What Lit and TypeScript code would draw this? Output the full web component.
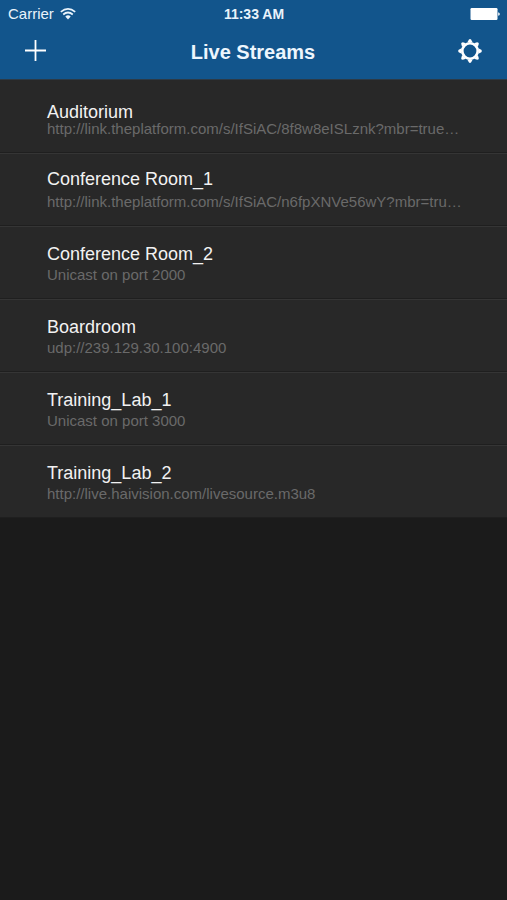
import { LitElement, html, svg, css } from "lit";
import { customElement, property } from "lit/decorators.js";
import { classMap } from "lit/directives/class-map.js";

type Spacing = "tight" | "normal" | "loose";

interface Stream {
  name: string;
  source: string;
  spacing: Spacing;
}

const STREAMS: Stream[] = [
  { name: "Auditorium", source: "http://link.theplatform.com/s/IfSiAC/8f8w8eISLznk?mbr=true…", spacing: "tight" },
  { name: "Conference Room_1", source: "http://link.theplatform.com/s/IfSiAC/n6fpXNVe56wY?mbr=tru…", spacing: "loose" },
  { name: "Conference Room_2", source: "Unicast on port 2000", spacing: "normal" },
  { name: "Boardroom", source: "udp://239.129.30.100:4900", spacing: "normal" },
  { name: "Training_Lab_1", source: "Unicast on port 3000", spacing: "normal" },
  { name: "Training_Lab_2", source: "http://live.haivision.com/livesource.m3u8", spacing: "normal" },
];

@customElement("status-bar")
export class StatusBar extends LitElement {
  static styles = css`
    :host {
      display: grid;
      grid-template-columns: 1fr auto 1fr;
      align-items: center;
      height: 26px;
      padding: 1px 7px 0 8px;
      color: #e9f3fb;
      font-size: 14px;
      line-height: 20px;
    }
    .carrier {
      display: flex;
      align-items: center;
      gap: 6px;
      font-size: 15px;
    }
    .time {
      font-weight: 700;
    }
    .battery {
      justify-self: end;
    }
    svg {
      display: block;
    }
  `;

  render() {
    return html`
      <div class="carrier">
        <span>Carrier</span>
        <svg width="16" height="12" viewBox="0 0 16 12" fill="none" stroke="currentColor" stroke-width="1.7" role="img" aria-label="Wi-Fi">
          <path d="M0.8 3.9Q8-2 15.2 3.9" />
          <path d="M3.2 6.5Q8 2.5 12.8 6.5" />
          <path d="M5.3 8.5Q8 6.2 10.7 8.5L8 11.4Z" fill="currentColor" stroke="none" />
        </svg>
      </div>
      <span class="time">11:33 AM</span>
      <svg class="battery" width="30" height="12" viewBox="0 0 30 12" fill="#fff" role="img" aria-label="Battery full">
        <rect x="0.5" y="0" width="27" height="12" rx="1.2" />
        <path d="M28.2 4.2Q29.8 4.6 29.8 6T28.2 7.8Z" />
      </svg>
    `;
  }
}

@customElement("nav-bar")
export class NavBar extends LitElement {
  static styles = css`
    :host {
      display: flex;
      align-items: center;
      justify-content: space-between;
      height: 48px;
      padding: 0 15px 0 14px;
      box-sizing: border-box;
      color: #fff;
    }
    .title {
      margin: 0;
      font-size: 20px;
      line-height: 24px;
      font-weight: 700;
      color: #edf6fd;
      padding-top: 2px;
    }
    .action {
      display: flex;
      align-items: center;
      justify-content: center;
      width: 44px;
      height: 44px;
      padding: 0;
      border: 0;
      background: none;
      color: inherit;
      cursor: pointer;
    }
  `;

  render() {
    const teeth = [0, 45, 90, 135, 180, 225, 270, 315];
    return html`
      <button class="action" type="button" aria-label="Add stream">
        <svg width="22" height="22" viewBox="0 0 22 22" stroke="currentColor" stroke-width="1.8">
          <path d="M10.5 0V21M0 10.5H21" />
        </svg>
      </button>
      <h1 class="title">Live Streams</h1>
      <button class="action" type="button" aria-label="Settings">
        <svg width="26" height="26" viewBox="-13 -13 26 26">
          <circle r="7.7" fill="none" stroke="currentColor" stroke-width="2.6" />
          ${teeth.map(
            (a) => svg`<path d="M-2.7-8.4L-1.2-11.3Q0-12.5 1.2-11.3L2.7-8.4Z" fill="currentColor" transform="rotate(${a})" />`
          )}
        </svg>
      </button>
    `;
  }
}

@customElement("stream-row")
export class StreamRow extends LitElement {
  @property({ attribute: false }) stream!: Stream;

  static styles = css`
    :host {
      display: block;
    }
    .row {
      display: flex;
      flex-direction: column;
      justify-content: flex-end;
      gap: 5px;
      width: 100%;
      height: 73px;
      box-sizing: border-box;
      padding: 0 24px 15px 47px;
      border: 0;
      border-top: 1px solid #353535;
      border-bottom: 1px solid #1f1f1f;
      background: #282828;
      font: inherit;
      text-align: left;
      cursor: pointer;
    }
    .tight {
      gap: 1px;
      border-top-color: #282828;
    }
    .loose {
      gap: 7px;
    }
    .name {
      font-size: 18px;
      line-height: 16px;
      color: #f2f2f2;
    }
    .source {
      width: 100%;
      font-size: 15px;
      line-height: 16px;
      color: #6a6a6a;
      white-space: nowrap;
      text-overflow: ellipsis;
      overflow-x: clip;
    }
  `;

  render() {
    const { name, source, spacing } = this.stream;
    return html`
      <button type="button" class=${classMap({ row: true, tight: spacing === "tight", loose: spacing === "loose" })}>
        <span class="name">${name}</span>
        <span class="source">${source}</span>
      </button>
    `;
  }
}

@customElement("app-root")
export class AppRoot extends LitElement {
  static styles = css`
    :host {
      display: block;
      min-height: 100vh;
      background: #1b1b1b;
      font-family: "Liberation Sans", Arial, Helvetica, sans-serif;
    }
    .header {
      display: flex;
      flex-direction: column;
      padding-bottom: 4px;
      background: #12558c;
      border-bottom: 1px solid #2c3a46;
    }
    .streams {
      margin: 0;
      padding: 0;
      list-style: none;
    }
  `;

  render() {
    return html`
      <header class="header">
        <status-bar></status-bar>
        <nav-bar></nav-bar>
      </header>
      <main>
        <ul class="streams">
          ${STREAMS.map((s) => html`<li><stream-row .stream=${s}></stream-row></li>`)}
        </ul>
      </main>
    `;
  }
}
